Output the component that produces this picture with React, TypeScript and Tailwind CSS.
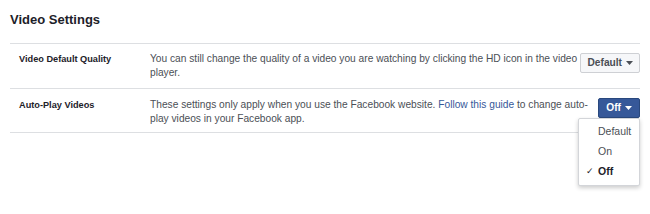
import React from "react";

const Caret = ({ className }: { className?: string }) => (
  <svg width="7" height="4" viewBox="0 0 7 4" className={className}>
    <path d="M0 0h7L3.5 4z" fill="currentColor" />
  </svg>
);

const Row = ({
  label,
  children,
  control,
  className,
}: {
  label: string;
  children: React.ReactNode;
  control: React.ReactNode;
  className?: string;
}) => (
  <div className={`flex flex-row border-b border-[#dddfe2] ${className ?? ""}`}>
    <div className="w-[140px] shrink-0 pl-[9px] text-[9.2px] leading-[14px] font-bold text-[#1d2129]">{label}</div>
    <div className="flex-1 text-[10.2px] leading-[14px] text-[#4b4f56]">{children}</div>
    <div className="w-[50px] shrink-0 flex justify-end">{control}</div>
  </div>
);

export default function App() {
  return (
    <div className="w-[650px] h-[214px] bg-white px-[10px] pt-[12px] font-['Liberation_Sans',Arial,sans-serif]">
      <h2 className="text-[13px] font-bold text-[#1d2129] leading-[16px] pb-[15px]">Video Settings</h2>
      <div className="border-t border-[#dddfe2]">
        <Row
          className="pt-[8px] pb-[8px]"
          label="Video Default Quality"
          control={
            <button className="shrink-0 mt-[1px] flex items-center gap-[4px] h-[20px] px-[6px] border border-[#ced0d4] rounded-[2px] bg-[#f6f7f9] text-[10.2px] font-bold text-[#4b4f56]">
              Default
              <Caret />
            </button>
          }
        >
          You can still change the quality of a video you are watching by clicking the HD icon in the video player.
        </Row>
        <Row
          className="pt-[9px] pb-[6px]"
          label="Auto-Play Videos"
          control={
            <div className="relative shrink-0">
              <button className="flex items-center gap-[4px] h-[20px] px-[7px] border border-[#29487d] rounded-[2px] bg-[#365899] text-[10.2px] font-bold text-white">
                Off
                <Caret />
              </button>
              <div className="absolute right-0 top-[20px] w-[62px] bg-white border border-[#d3d5d9] rounded-[2px] shadow-[0_2px_4px_rgba(0,0,0,0.2)] py-[3px] text-[10.5px] text-[#4b4f56] z-10">
                <div className="h-[20px] flex items-center pl-[19px]">Default</div>
                <div className="h-[20px] flex items-center pl-[19px]">On</div>
                <div className="h-[20px] flex items-center pl-[7px] font-bold text-[#1d2129]">
                  <span className="w-[12px] text-[9px] font-normal">✓</span>Off
                </div>
              </div>
            </div>
          }
        >
          These settings only apply when you use the Facebook website.{" "}
          <span className="text-[#365899]">Follow this guide</span> to change auto-play videos in your Facebook app.
        </Row>
      </div>
    </div>
  );
}
